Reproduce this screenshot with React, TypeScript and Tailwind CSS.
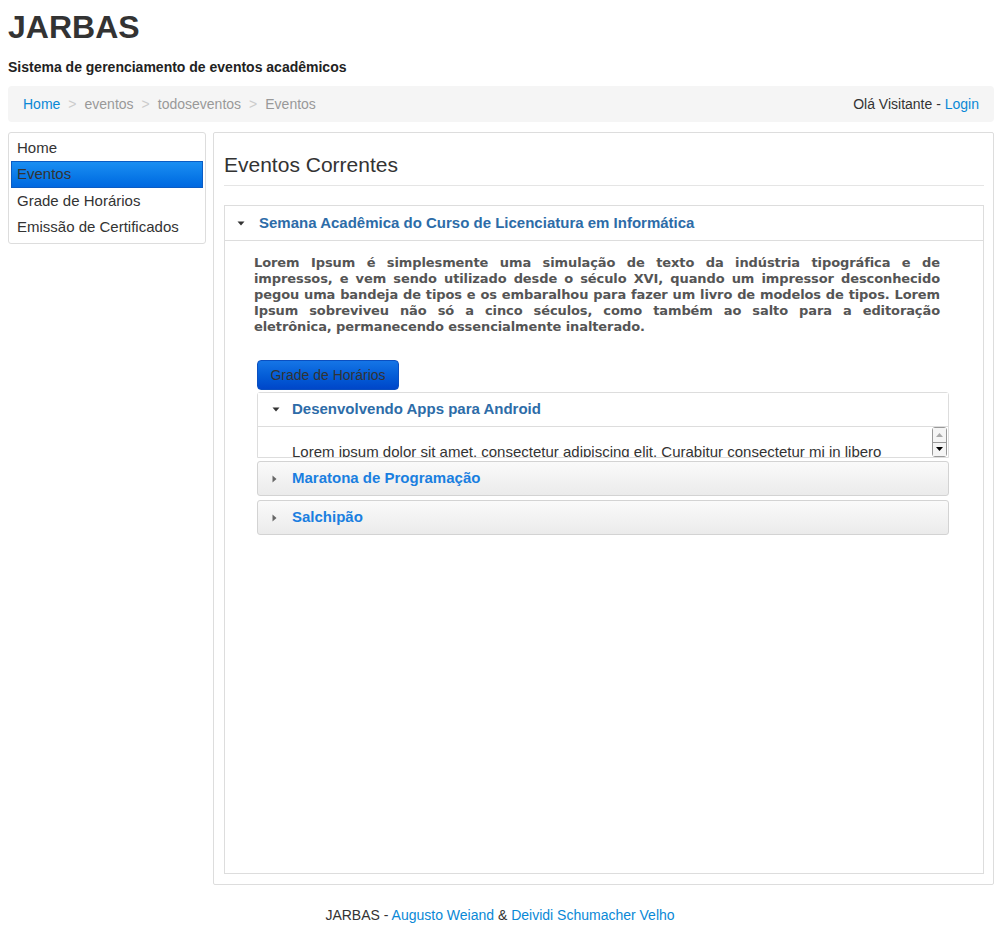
import React from "react";

// lines split as in the original layout
const loremLines = [
  "Lorem Ipsum é simplesmente uma simulação de texto da indústria tipográfica e de",
  "impressos, e vem sendo utilizado desde o século XVI, quando um impressor desconhecido",
  "pegou uma bandeja de tipos e os embaralhou para fazer um livro de modelos de tipos. Lorem",
  "Ipsum sobreviveu não só a cinco séculos, como também ao salto para a editoração",
  "eletrônica, permanecendo essencialmente inalterado.",
];

function CaretDown() {
  return (
    <svg width="8" height="5" viewBox="0 0 8 5">
      <path d="M0.5 0.5 L7.5 0.5 L4 4.5 Z" fill="#333" />
    </svg>
  );
}

function CaretRight() {
  return (
    <svg width="5" height="8" viewBox="0 0 5 8">
      <path d="M0.5 0.5 L4.5 4 L0.5 7.5 Z" fill="#666" />
    </svg>
  );
}

function Crumb({ label }: { label: string }) {
  return (
    <>
      <span className="px-[8px] text-[#ccc]">&gt;</span>
      <span className="text-[#999]">{label}</span>
    </>
  );
}

function ClosedHeader({ title }: { title: string }) {
  return (
    <div className="mt-[3px] flex h-[35px] items-center rounded-[3px] border border-[#d3d3d3] bg-gradient-to-b from-[#fafafa] to-[#ebebeb] pl-[14px]">
      <CaretRight />
      <span className="ml-[15px] text-[15px] font-bold text-[#1a7fe0]">{title}</span>
    </div>
  );
}

export default function App() {
  return (
    <div className="min-h-[934px] bg-white text-[14px] text-[#333] font-['Liberation_Sans',Arial,sans-serif]">
      <div className="ml-[8px] w-[986px] pt-[7px]">
        <h1 className="text-[32px] font-bold leading-[40px] text-[#333]">JARBAS</h1>
        <p className="mt-[10px] text-[14px] font-bold leading-[20px] text-[#222]">
          Sistema de gerenciamento de eventos acadêmicos
        </p>

        {/* breadcrumb */}
        <div className="mt-[9px] flex h-[36px] items-center justify-between rounded-[4px] bg-[#f5f5f5] px-[15px]">
          <div className="flex items-center">
            <a className="text-[#0a88d6]">Home</a>
            <Crumb label="eventos" />
            <Crumb label="todoseventos" />
            <Crumb label="Eventos" />
          </div>
          <div>
            Olá Visitante - <a className="text-[#0a88d6]">Login</a>
          </div>
        </div>

        <div className="mt-[10px] flex items-start gap-[7px]">
          {/* sidebar */}
          <div className="w-[198px] rounded-[3px] border border-[#ddd] p-[2px] pb-[3px]">
            <div className="flex h-[26px] items-center px-[6px] text-[15px] text-[#333]">Home</div>
            <div className="flex h-[27px] items-center border border-[#0a5cc4] bg-gradient-to-b from-[#1a8ef2] to-[#0068e0] px-[5px] text-[15px] text-[#333]">
              Eventos
            </div>
            <div className="flex h-[26px] items-center px-[6px] text-[15px] text-[#333]">Grade de Horários</div>
            <div className="flex h-[26px] items-center px-[6px] text-[15px] text-[#333]">Emissão de Certificados</div>
          </div>

          {/* main panel */}
          <div className="flex h-[753px] flex-1 flex-col rounded-[2px] border border-[#ddd] pb-[10px] pl-[10px] pr-[9px]">
            <h2 className="mt-[19px] text-[21px] leading-[26px] text-[#333]">Eventos Correntes</h2>
            <div className="mt-[7px] border-t border-[#e5e5e5]" />

            <div className="mt-[19px] flex flex-1 flex-col border border-[#ddd]">
              <div className="flex h-[35px] shrink-0 items-center border-b border-[#ddd] bg-white pl-[12px]">
                <CaretDown />
                <span className="ml-[14px] text-[15px] font-bold text-[#2d6ca8]">
                  Semana Acadêmica do Curso de Licenciatura em Informática
                </span>
              </div>

              <div className="flex-1 pl-[29px] pr-[43px] pt-[14px]">
                <div className="font-['DejaVu_Sans',Verdana,sans-serif] text-[13px] font-bold leading-[16px] tracking-[-0.1px] text-[#555]">
                  {loremLines.map((line, i) => (
                    <div
                      key={i}
                      className={
                        i < loremLines.length - 1
                          ? "whitespace-nowrap text-justify [text-align-last:justify]"
                          : "whitespace-nowrap"
                      }
                    >
                      {line}
                    </div>
                  ))}
                </div>

                <div className="ml-[3px] mr-[-9px] mt-[25px]">
                  <button className="h-[30px] w-[142px] rounded-[4px] border border-[#0a4fc0] bg-gradient-to-b from-[#1575e6] to-[#0046c9] text-[14px] text-[#333]">
                    Grade de Horários
                  </button>

                  <div className="mt-[2px] rounded-t-[3px] border border-[#ddd]">
                    <div className="flex h-[34px] items-center border-b border-[#ddd] bg-white pl-[14px]">
                      <CaretDown />
                      <span className="ml-[12px] text-[15px] font-bold text-[#2d6ca8]">
                        Desenvolvendo Apps para Android
                      </span>
                    </div>
                    <div className="relative h-[30px] overflow-hidden pl-[34px] pt-[14px] text-[15px] leading-[22px]">
                      Lorem ipsum dolor sit amet, consectetur adipiscing elit. Curabitur consectetur mi in libero
                      <div className="absolute right-[1px] top-0 flex h-[30px] w-[15px] flex-col rounded-[3px] border border-[#999] bg-white">
                        <div className="flex flex-1 items-center justify-center border-b border-[#999] bg-[#f5f5f5]">
                          <svg width="7" height="4" viewBox="0 0 7 4">
                            <path d="M0 4 L3.5 0 L7 4 Z" fill="#aaa" />
                          </svg>
                        </div>
                        <div className="flex flex-1 items-center justify-center bg-[#f5f5f5]">
                          <svg width="7" height="4" viewBox="0 0 7 4">
                            <path d="M0 0 L7 0 L3.5 4 Z" fill="#000" />
                          </svg>
                        </div>
                      </div>
                    </div>
                  </div>
                  <ClosedHeader title="Maratona de Programação" />
                  <div className="h-[1px]" />
                  <ClosedHeader title="Salchipão" />
                </div>
              </div>
            </div>
          </div>
        </div>
      </div>

      <div className="mt-[20px] text-center leading-[20px]">
        JARBAS - <a className="text-[#0a88d6]">Augusto Weiand</a> &amp;{" "}
        <a className="text-[#0a88d6]">Deividi Schumacher Velho</a>
      </div>
    </div>
  );
}
